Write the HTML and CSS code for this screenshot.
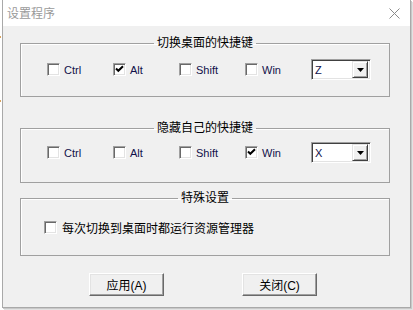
FILE: index.html
```html
<!DOCTYPE html>
<html lang="zh">
<head>
<meta charset="utf-8">
<link rel="stylesheet" href="styles.css">
</head>
<body>
<span class="speck speck-a"></span>
<span class="speck speck-b"></span>
<div class="window">
  <div class="titlebar">
    <span class="title">设置程序</span>
    <svg class="close" width="11" height="11" viewBox="0 0 11 11"><path d="M0.5 0.5 L10.5 10.5 M10.5 0.5 L0.5 10.5" stroke="#8a8a8a" stroke-width="1" fill="none"/></svg>
  </div>
  <div class="content">
    <fieldset class="group g1">
      <legend>切换桌面的快捷键</legend>
      <div class="row">
        <label class="chk"><span class="box"></span><span class="lat">Ctrl</span></label>
        <label class="chk"><span class="box"><svg width="11" height="11" viewBox="0 0 11 11"><path d="M2 4.5 L4.3 6.8 L9 2.2" stroke="#000" stroke-width="2" fill="none"/></svg></span><span class="lat">Alt</span></label>
        <label class="chk"><span class="box"></span><span class="lat">Shift</span></label>
        <label class="chk"><span class="box"></span><span class="lat">Win</span></label>
        <div class="combo"><span class="val">Z</span><span class="drop"><svg width="7" height="4" viewBox="0 0 7 4"><path d="M0 0 H7 L3.5 4 Z" fill="#000"/></svg></span></div>
      </div>
    </fieldset>
    <fieldset class="group g2">
      <legend>隐藏自己的快捷键</legend>
      <div class="row">
        <label class="chk"><span class="box"></span><span class="lat">Ctrl</span></label>
        <label class="chk"><span class="box"></span><span class="lat">Alt</span></label>
        <label class="chk"><span class="box"></span><span class="lat">Shift</span></label>
        <label class="chk"><span class="box"><svg width="11" height="11" viewBox="0 0 11 11"><path d="M2 4.5 L4.3 6.8 L9 2.2" stroke="#000" stroke-width="2" fill="none"/></svg></span><span class="lat">Win</span></label>
        <div class="combo"><span class="val">X</span><span class="drop"><svg width="7" height="4" viewBox="0 0 7 4"><path d="M0 0 H7 L3.5 4 Z" fill="#000"/></svg></span></div>
      </div>
    </fieldset>
    <fieldset class="group g3">
      <legend>特殊设置</legend>
      <label class="chk single"><span class="box"></span><span>每次切换到桌面时都运行资源管理器</span></label>
    </fieldset>
    <div class="buttons">
      <button class="btn">应用(A)</button>
      <button class="btn">关闭(C)</button>
    </div>
  </div>
</div>
</body>
</html>
```
FILE: styles.css
```css
html, body {
  margin: 0;
  padding: 0;
}
body {
  background: #ffffff;
  font-family: "Liberation Sans", "Noto Sans CJK SC", sans-serif;
  font-size: 12px;
  color: #000;
  width: 413px;
  height: 310px;
  overflow: hidden;
  position: relative;
}
.speck {
  position: absolute;
  left: 0;
  width: 1px;
  height: 2px;
  background: #d9a35e;
}
.speck-a { top: 36px; }
.speck-b { top: 100px; }

.window {
  margin-left: 2px;
  width: 407px;
  height: 307px;
  border: 1px solid #a9a9a9;
  border-top: none;
  background: #f0f0f0;
  box-shadow: 1px 1px 0 #c8c8c8, 2px 2px 0 #e2e2e2;
}
.titlebar {
  height: 26px;
  background: #ffffff;
  display: flex;
  align-items: center;
  justify-content: space-between;
  padding: 0 10px 0 4px;
}
.title {
  color: #9a9a9a;
  font-size: 12px;
  line-height: 14px;
  margin-top: 1px;
}
.close {
  margin-top: 1px;
}
.content {
  padding: 10px 0 0 17px;
}
.group {
  margin: 0;
  padding: 0;
  width: 368px;
  border: 1px solid #a0a0a0;
  box-shadow: inset 1px 1px 0 #ffffff;
  min-width: 0;
}
.group legend {
  margin: 0 auto;
  padding: 0 3px;
  font-size: 12px;
  line-height: 14px;
}
.g1 .row { margin: 9px 0 16px 26px; }
.g2 { margin-top: 24px; }
.g2 .row { margin: 7px 0 19px 26px; }
.g3 { margin-top: 8px; }

.row {
  display: grid;
  grid-template-columns: 66px 66px 66px 66px 60px;
  align-items: center;
  height: 21px;
}
.chk {
  display: flex;
  align-items: center;
  height: 15px;
}
.box {
  box-sizing: border-box;
  width: 13px;
  height: 13px;
  background: #fff;
  border-top: 1px solid #a0a0a0;
  border-left: 1px solid #a0a0a0;
  border-right: 1px solid #ffffff;
  border-bottom: 1px solid #ffffff;
  box-shadow: inset 1px 1px 0 #696969, inset -1px -1px 0 #e3e3e3;
  margin-right: 4px;
  display: flex;
  align-items: center;
  justify-content: center;
  flex: none;
}
.lat {
  font-size: 11px;
  color: #10104a;
}
.combo {
  box-sizing: border-box;
  width: 60px;
  height: 21px;
  background: #fff;
  border-top: 1px solid #a0a0a0;
  border-left: 1px solid #a0a0a0;
  border-right: 1px solid #ffffff;
  border-bottom: 1px solid #ffffff;
  box-shadow: inset 1px 1px 0 #404040, inset -1px -1px 0 #e3e3e3;
  display: flex;
  align-items: center;
  justify-content: space-between;
  padding: 2px 2px 2px 3px;
}
.val {
  font-size: 11px;
  color: #10104a;
}
.drop {
  box-sizing: border-box;
  width: 16px;
  height: 17px;
  background: #f0f0f0;
  border-top: 1px solid #e3e3e3;
  border-left: 1px solid #e3e3e3;
  border-right: 1px solid #404040;
  border-bottom: 1px solid #404040;
  box-shadow: inset 1px 1px 0 #ffffff, inset -1px -1px 0 #a0a0a0;
  display: flex;
  align-items: center;
  justify-content: center;
}
.single {
  margin: 15px 0 20px 23px;
}
.single .box {
  margin-right: 5px;
}
.buttons {
  display: flex;
  gap: 78px;
  margin: 17px 0 0 69px;
}
.btn {
  box-sizing: border-box;
  width: 75px;
  height: 23px;
  padding: 0;
  margin: 0;
  background: #f0f0f0;
  font-family: "Liberation Sans", "Noto Sans CJK SC", sans-serif;
  font-size: 12px;
  color: #000;
  border-top: 1px solid #ffffff;
  border-left: 1px solid #ffffff;
  border-right: 1px solid #696969;
  border-bottom: 1px solid #696969;
  box-shadow: inset -1px -1px 0 #a0a0a0, inset 1px 1px 0 #e3e3e3;
}
```
